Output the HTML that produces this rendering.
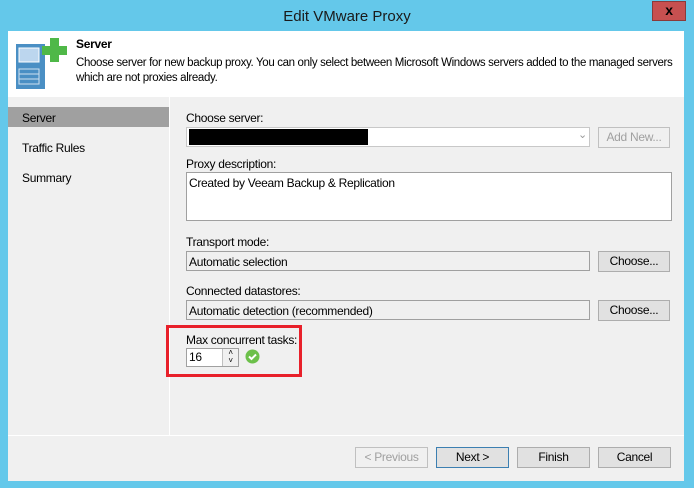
<!DOCTYPE html>
<html><head><style>
*{box-sizing:border-box;margin:0;padding:0}
body{width:694px;height:488px;background:#64c8ea;font-family:"Liberation Sans",Arial,sans-serif;font-size:12px;color:#000;position:relative;overflow:hidden;letter-spacing:-0.3px}
.abs{position:absolute;white-space:nowrap}
.title{left:0;top:0;width:694px;height:32px;text-align:center;line-height:33px;font-size:15px;color:#1a1a1a;letter-spacing:0}
.close{left:652px;top:1px;width:34px;height:20px;background:#c75050;border:1px solid #8a3a3a;color:#000;font-weight:bold;text-align:center;line-height:17px;font-size:14px}
.win{left:8px;top:31px;width:676px;height:450px;background:#f0f0f0}
.hdr{left:8px;top:31px;width:676px;height:66px;background:#fff}
.nav{left:8px;top:97px;width:162px;height:338px;background:#f0f0f0;border-right:1px solid #fff}
.sel{left:8px;top:107px;width:161px;height:20px;background:#a0a0a0}
.box{background:#fff;border:1px solid #a0a0a0}
.ro{background:#f0f0f0;border:1px solid #a0a0a0;padding:3px 2px}
.btn{background:#e1e1e1;border:1px solid #adadad;text-align:center;line-height:19px}
</style></head><body>
<div class="abs title">Edit VMware Proxy</div>
<div class="abs close">x</div>
<div class="abs win"></div>
<div class="abs hdr"></div>
<svg class="abs" style="left:16px;top:38px" width="52" height="52">
<rect x="0" y="6" width="29" height="45" fill="#4a8fc4"/>
<rect x="3" y="10" width="20" height="14" fill="#bcd6ee" stroke="#fff" stroke-width="1"/>
<rect x="3" y="31" width="20" height="15" fill="none" stroke="#cfe0f0" stroke-width="1"/>
<line x1="3" y1="36" x2="23" y2="36" stroke="#cfe0f0"/><line x1="3" y1="41" x2="23" y2="41" stroke="#cfe0f0"/>
<rect x="34" y="0" width="9" height="24" fill="#4fb848"/><rect x="26" y="8" width="25" height="9" fill="#4fb848"/>
</svg>
<div class="abs" style="left:76px;top:37px;font-weight:bold;font-size:12px">Server</div>
<div class="abs" style="left:76px;top:56px;line-height:15px;font-size:11.5px;letter-spacing:-0.35px">Choose server for new backup proxy. You can only select between Microsoft Windows servers added to the managed servers<br>which are not proxies already.</div>
<div class="abs nav"></div>
<div class="abs sel"></div>
<div class="abs" style="left:22px;top:111px">Server</div>
<div class="abs" style="left:22px;top:141px">Traffic Rules</div>
<div class="abs" style="left:22px;top:171px">Summary</div>
<div class="abs" style="left:186px;top:111px">Choose server:</div>
<div class="abs box" style="left:186px;top:127px;width:404px;height:20px;border-color:#c8c8c8"></div>
<div class="abs" style="left:189px;top:129px;width:179px;height:16px;background:#000"></div>
<div class="abs" style="left:578px;top:128px;color:#999;font-size:11px">&#8964;</div>
<div class="abs btn" style="left:598px;top:127px;width:72px;height:21px;color:#a0a0a0;background:#f0f0f0;border-color:#c0c0c0">Add New...</div>
<div class="abs" style="left:186px;top:157px">Proxy description:</div>
<div class="abs box" style="left:186px;top:172px;width:486px;height:49px;padding:3px 2px">Created by Veeam Backup &amp; Replication</div>
<div class="abs" style="left:186px;top:235px">Transport mode:</div>
<div class="abs ro" style="left:186px;top:251px;width:404px;height:20px">Automatic selection</div>
<div class="abs btn" style="left:598px;top:251px;width:72px;height:21px">Choose...</div>
<div class="abs" style="left:186px;top:284px">Connected datastores:</div>
<div class="abs ro" style="left:186px;top:300px;width:404px;height:20px">Automatic detection (recommended)</div>
<div class="abs btn" style="left:598px;top:300px;width:72px;height:21px">Choose...</div>
<div class="abs" style="left:166px;top:325px;width:136px;height:52px;border:3px solid #e8202a"></div>
<div class="abs" style="left:186px;top:333px">Max concurrent tasks:</div>
<div class="abs box" style="left:186px;top:348px;width:53px;height:19px;padding:1px 2px">16</div>
<div class="abs" style="left:222px;top:349px;width:16px;height:17px;background:#f0f0f0;border-left:1px solid #c0c0c0;font-size:8px;text-align:center;line-height:8px">&#708;<br>&#709;</div>
<svg class="abs" style="left:245px;top:349px" width="15" height="15"><circle cx="7.5" cy="7.5" r="7" fill="#6cc04a"/><path d="M4 7.5l2.5 2.5 4.5-4.5" stroke="#fff" stroke-width="2" fill="none"/></svg>
<div class="abs" style="left:170px;top:435px;width:514px;height:1px;background:#fff"></div>
<div class="abs" style="left:8px;top:435px;width:162px;height:1px;background:#fff"></div>
<div class="abs btn" style="left:355px;top:447px;width:73px;height:21px;color:#a0a0a0;background:#f0f0f0;border-color:#c0c0c0">&lt; Previous</div>
<div class="abs btn" style="left:436px;top:447px;width:73px;height:21px;border-color:#3c7fb1">Next &gt;</div>
<div class="abs btn" style="left:517px;top:447px;width:73px;height:21px">Finish</div>
<div class="abs btn" style="left:598px;top:447px;width:73px;height:21px">Cancel</div>
</body></html>
